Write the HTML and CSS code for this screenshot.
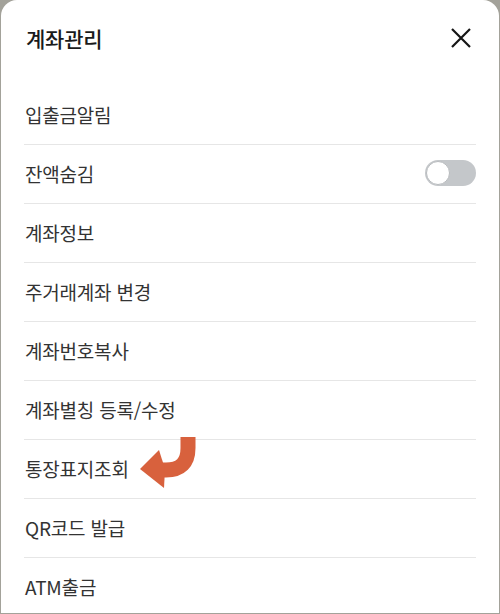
FILE: index.html
```html
<!DOCTYPE html>
<html lang="ko">
<head>
<meta charset="utf-8">
<link rel="stylesheet" href="styles.css">
</head>
<body>
<div class="sheet">
  <header class="sheet-header">
    <h1 class="sheet-title">계좌관리</h1>
    <button class="close-btn" aria-label="닫기">
      <svg width="22" height="22" viewBox="0 0 22 22"><path d="M2 2 L20 20 M20 2 L2 20" stroke="#151515" stroke-width="2.2" fill="none"/></svg>
    </button>
  </header>
  <ul class="menu">
    <li class="menu-item">입출금알림</li>
    <li class="menu-item">잔액숨김<span class="toggle"><span class="knob"></span></span></li>
    <li class="menu-item">계좌정보</li>
    <li class="menu-item">주거래계좌 변경</li>
    <li class="menu-item">계좌번호복사</li>
    <li class="menu-item">계좌별칭 등록/수정</li>
    <li class="menu-item has-pointer">통장표지조회
      <svg class="pointer" width="62" height="58" viewBox="0 0 62 58">
        <path d="M52 3 V14 Q52 36 30 36 H22" stroke="#d8613d" stroke-width="15" fill="none"/>
        <polygon points="4,35 23,16 29,35 28,54" fill="#d8613d"/>
      </svg>
    </li>
    <li class="menu-item">QR코드 발급</li>
    <li class="menu-item last">ATM출금</li>
  </ul>
</div>
</body>
</html>
```
FILE: styles.css
```css
html, body {
  margin: 0;
  padding: 0;
}
body {
  width: 500px;
  height: 614px;
  background: #a3a29a;
  font-family: "Noto Sans CJK KR", "Noto Sans", sans-serif;
  overflow: hidden;
}
.sheet {
  margin: 0 1px;
  height: 613px;
  background: #fff;
  border-radius: 16px 16px 0 0;
  overflow: hidden;
}
.sheet-header {
  height: 76px;
  display: flex;
  align-items: center;
  justify-content: space-between;
  padding: 0 27px 0 25px;
}
.sheet-title {
  margin: 0;
  font-size: 21px;
  font-weight: 500;
  color: #1a1a1a;
  letter-spacing: -0.2px;
}
.close-btn {
  border: 0;
  background: none;
  padding: 0;
  width: 22px;
  height: 22px;
  display: flex;
}
.menu {
  list-style: none;
  margin: 0;
  padding: 10px 0 0;
}
.menu-item {
  position: relative;
  height: 58px;
  margin: 0 23px;
  border-bottom: 1px solid #e6e6e6;
  display: flex;
  align-items: center;
  justify-content: space-between;
  padding-left: 1px;
  padding-bottom: 2px;
  box-sizing: border-box;
  height: 59px;
  font-size: 19px;
  font-weight: 400;
  color: #333;
  letter-spacing: -0.2px;
}
.menu-item.last {
  border-bottom: 0;
}
.toggle {
  width: 51px;
  height: 26px;
  border-radius: 13px;
  background: #c4c7ca;
  display: flex;
  align-items: center;
  padding-left: 1px;
  box-sizing: border-box;
}
.knob {
  width: 22px;
  height: 22px;
  border-radius: 50%;
  background: #fff;
  border: 1px solid #b8bbbe;
}
.pointer {
  position: absolute;
  left: 112px;
  top: -6px;
}
```
